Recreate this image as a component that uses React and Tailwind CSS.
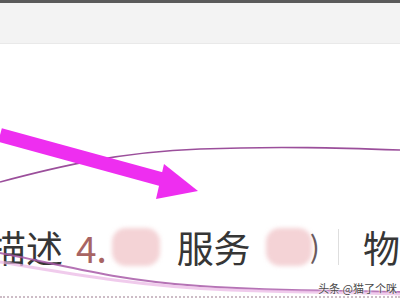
import React from 'react';

const cjk = { fontFamily: '"Noto Sans CJK SC", "Noto Sans", sans-serif' };

function Blob({ className }) {
    return <div className={`rounded-[14px] bg-[#f4d3d6] blur-[2px] ${className}`} />;
}

export default function App() {
    return (
        <div className="relative w-[400px] h-[300px] overflow-hidden bg-white" style={cjk}>
            {/* top bar */}
            <div className="h-[44px] border-t-[3px] border-[#5a5a5a] bg-[#f3f3f3] border-b border-b-[#e9e9e9]" />

            {/* rating row */}
            <div className="mt-[182px] h-[42px] flex items-center text-[37px] leading-none text-[#363636] font-normal">
                <span className="ml-[-11px] w-[74px] whitespace-nowrap">描述</span>
                <span className="ml-[13px] text-[#a86463] w-[34px] whitespace-nowrap">4.</span>
                <Blob className="ml-[2px] w-[48px] h-[38px]" />
                <span className="ml-[17px] w-[76px] whitespace-nowrap">服务</span>
                <div className="ml-[14px] relative w-[56px] h-[38px]">
                    <Blob className="w-[46px] h-[38px] bg-[#f2cdd2]" />
                    <span className="absolute right-[2px] top-[2px] text-[30px] text-[#6a5a5e]">)</span>
                </div>
                <div className="ml-[16px] w-px h-[36px] bg-[#dedede]" />
                <span className="ml-[24px] whitespace-nowrap">物</span>
            </div>

            {/* dotted bottom edge */}
            <div className="absolute left-0 right-0 bottom-0 h-[4px] border-t-2 border-dotted border-[#cdbcc6]" />

            {/* annotations */}
            <svg className="absolute inset-0" width="400" height="300" viewBox="0 0 400 300">
                <path d="M0 182 C 60 166, 120 152, 200 149 S 340 148, 400 150" fill="none" stroke="#9b4f9b" strokeWidth="1.6" />
                <path d="M0 253 C 50 262, 110 280, 200 286 S 340 290, 400 292" fill="none" stroke="#a85aa8" strokeWidth="2" opacity="0.85" />
                <path d="M0 262 C 60 272, 140 287, 230 290 S 350 292, 400 294" fill="none" stroke="#e9b5e4" strokeWidth="3" opacity="0.7" />
                <path d="M0 135 L 168 181" stroke="#ee2ef0" strokeWidth="14" strokeLinecap="butt" />
                <polygon points="164,164 198,191 156,199" fill="#ee2ef0" />
            </svg>

            {/* watermark */}
            <div className="absolute right-[3px] bottom-[6px] text-[11px] leading-none text-[#4a4a4a] [text-shadow:0_0_2px_#fff,0_0_2px_#fff]">
                头条 @猫了个咪
            </div>
        </div>
    );
}
